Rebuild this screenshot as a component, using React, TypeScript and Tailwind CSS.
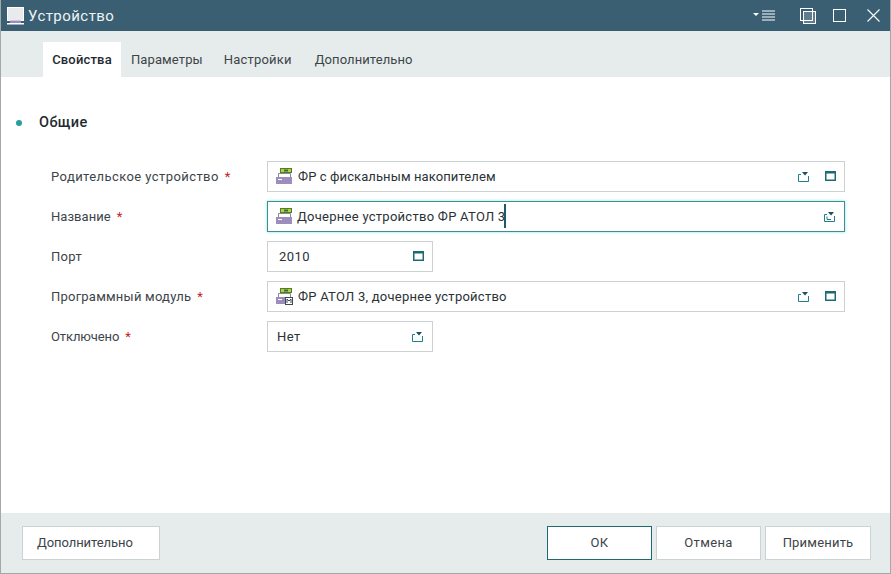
const font = "font-['Roboto','Noto_Sans',sans-serif]";

function DeviceIcon({ module }: { module?: boolean }) {
  return (
    <svg width="18" height="17" viewBox="0 0 18 17" className="shrink-0">
      <rect x="5.5" y="0.5" width="11" height="4" fill="#b5d334" stroke="#4e7a3a" />
      <rect x="9" y="1.5" width="4" height="2" fill="#3f6b33" />
      <path d="M3.5 9V5.5H15.5V9" fill="#fff" stroke="#8a8a8a" />
      <rect x="1" y="9" width="16" height="7" fill="#9c8dbd" />
      <rect x="3" y="11" width="4" height="1" fill="#fff" />
      {module && (
        <>
          <rect x="10" y="9" width="8" height="8" fill="#3b4a55" />
          <rect x="11" y="10" width="6" height="6" fill="#fff" />
          <path d="M12 15V11L14 13L16 11V15" fill="none" stroke="#3b4a55" strokeWidth="1" />
        </>
      )}
    </svg>
  );
}

function PickIcon({ focused }: { focused?: boolean }) {
  return (
    <svg width="11" height="11" viewBox="0 0 11 11" className="shrink-0 -translate-x-px">
      <path d="M3 3.5H0.5V10.5H10.5V5" fill="none" stroke="#1f7f8a" />
      <path d="M4 1H10L7 4.5Z" fill="#1d4f5c" />
      {focused && <path d="M3 5.5V8.5H7" fill="none" stroke="#1f7f8a" />}
    </svg>
  );
}

function WindowIcon() {
  return (
    <svg width="11" height="10" viewBox="0 0 11 10" className="shrink-0">
      <rect x="0.75" y="0.75" width="9.5" height="8.5" fill="none" stroke="#1d6a74" strokeWidth="1.5" />
      <rect x="0" y="0" width="11" height="2.5" fill="#1d6a74" />
    </svg>
  );
}

function Row({ children, label, required, spacing }: { children: React.ReactNode; label: string; required?: boolean; spacing: string }) {
  return (
    <div className="flex h-[31px] items-center">
      <div className={`w-[216px] shrink-0 text-[13px] text-[#3d4449] ${spacing}`}>
        {label}
        {required && <span className="ml-[6px] text-[#c5221f]">*</span>}
      </div>
      {children}
    </div>
  );
}

function Button({ children, className, primary }: { children: string; className: string; primary?: boolean }) {
  return (
    <button
      className={`${className} h-[34px] border bg-white text-[13px] text-[#3d4449] ${
        primary ? "border-[#1e6a74]" : "border-[#ccd2d2]"
      }`}
    >
      {children}
    </button>
  );
}

export default function App() {
  return (
    <div className={`${font} flex h-[574px] w-[891px] flex-col overflow-hidden border-x border-b border-[#a3a8a8] bg-white`}>
      <div className="-mx-px flex h-[31px] shrink-0 items-center bg-[#3a5f72] pl-[7px] text-white">
        <svg width="17" height="18" viewBox="0 0 17 18" className="shrink-0">
          <rect x="0.5" y="0.5" width="16" height="13" fill="#e8eaec" stroke="#fff" />
          <rect x="3" y="13.5" width="11" height="3" fill="#9c8dbd" />
          <rect x="0" y="16" width="17" height="1.5" fill="#fff" />
        </svg>
        <span className="ml-[4px] pt-[1px] text-[15px] tracking-[0.45px] text-[#eef3f5]">Устройство</span>
        <div className="ml-auto flex items-center">
          <svg width="22" height="11" viewBox="0 0 22 11">
            <path d="M0 3H6L3 6Z" fill="#fff" />
            <path d="M9 1H22M9 4H22M9 7H22M9 10H22" stroke="#fff" />
          </svg>
          <svg width="16" height="16" viewBox="0 0 16 16" className="ml-[25px]">
            <rect x="0.5" y="0.5" width="12" height="12" fill="none" stroke="#fff" />
            <rect x="3.5" y="3.5" width="12" height="12" fill="#ffffff30" stroke="#fff" />
          </svg>
          <svg width="13" height="13" viewBox="0 0 13 13" className="ml-[17px]">
            <rect x="0.5" y="0.5" width="12" height="12" fill="none" stroke="#fff" />
          </svg>
          <svg width="13" height="13" viewBox="0 0 13 13" className="ml-[21px] mr-[11px]">
            <path d="M0.5 0.5L12.5 12.5M12.5 0.5L0.5 12.5" stroke="#fff" strokeWidth="1.1" />
          </svg>
        </div>
      </div>

      <div className="flex h-[46px] shrink-0 items-end bg-[#e6ecec] pl-[42px] text-[13px] text-[#3d4449]">
        <div className="flex h-[35px] w-[78px] items-center justify-center bg-white font-medium tracking-[0.18px] text-[#1f2a30]">Свойства</div>
        <div className="flex h-[35px] items-center pl-[10px] tracking-[0.1px]">Параметры</div>
        <div className="flex h-[35px] items-center pl-[21px] tracking-[0.2px]">Настройки</div>
        <div className="flex h-[35px] items-center pl-[23px] tracking-[0.09px]">Дополнительно</div>
      </div>

      <div className="flex-1">
        <div className="flex items-center pl-[15px] pt-[35px]">
          <span className="size-[6px] rounded-full bg-[#2a9d9c]" />
          <span className="ml-[17px] text-[14.5px] font-medium tracking-[0.4px] text-[#1f2a30]">Общие</span>
        </div>
        <div className="flex flex-col gap-[9px] pl-[50px] pt-[27px]">
          <Row label="Родительское устройство" required spacing="tracking-[0.42px]">
            <div className="flex h-[31px] w-[578px] items-center border border-[#ccd2d2] pl-[7px] pr-[8px]">
              <DeviceIcon />
              <span className="ml-[5px] text-[13px] tracking-[0.1px] text-[#2b3236]">ФР с фискальным накопителем</span>
              <div className="ml-auto flex items-center gap-[15px]">
                <PickIcon />
                <WindowIcon />
              </div>
            </div>
          </Row>
          <Row label="Название" required spacing="tracking-[0.05px]">
            <div className="flex h-[31px] w-[578px] items-center border border-[#3d8f95] pl-[7px] pr-[8px] shadow-[0_0_3px_#8fe0dc]">
              <DeviceIcon />
              <span className="ml-[4px] text-[13px] tracking-[0.27px] text-[#2b3236]">Дочернее устройство ФР АТОЛ 3</span>
              <span className="-ml-[1px] h-[24px] w-[2px] bg-[#1d5a68]" />
              <div className="ml-auto flex items-center">
                <PickIcon focused />
              </div>
            </div>
          </Row>
          <Row label="Порт" spacing="tracking-[0.3px]">
            <div className="flex h-[31px] w-[166px] items-center border border-[#ccd2d2] pl-[11px] pr-[8px]">
              <span className="text-[13px] tracking-[0.45px] text-[#2b3236]">2010</span>
              <div className="ml-auto flex items-center">
                <WindowIcon />
              </div>
            </div>
          </Row>
          <Row label="Программный модуль" required spacing="tracking-[0.22px]">
            <div className="flex h-[31px] w-[578px] items-center border border-[#ccd2d2] pl-[7px] pr-[8px]">
              <DeviceIcon module />
              <span className="ml-[5px] text-[13px] tracking-[0.25px] text-[#2b3236]">ФР АТОЛ 3, дочернее устройство</span>
              <div className="ml-auto flex items-center gap-[15px]">
                <PickIcon />
                <WindowIcon />
              </div>
            </div>
          </Row>
          <Row label="Отключено" required spacing="tracking-[-0.1px]">
            <div className="flex h-[31px] w-[166px] items-center border border-[#ccd2d2] pl-[9px] pr-[8px]">
              <span className="text-[13px] tracking-[0.4px] text-[#2b3236]">Нет</span>
              <div className="ml-auto flex items-center">
                <PickIcon />
              </div>
            </div>
          </Row>
        </div>
      </div>

      <div className="flex h-[60px] shrink-0 items-start bg-[#e6ecec] pl-[21px] pr-[19px] pt-[13px]">
        <Button className="w-[138px] pl-[14px] text-left tracking-[-0.07px]">Дополнительно</Button>
        <div className="ml-auto flex gap-[4px]">
          <Button className="w-[105px] tracking-[0.3px]" primary>
            ОК
          </Button>
          <Button className="w-[105px] tracking-[0.4px]">Отмена</Button>
          <Button className="w-[106px] tracking-[0.2px]">Применить</Button>
        </div>
      </div>
    </div>
  );
}
